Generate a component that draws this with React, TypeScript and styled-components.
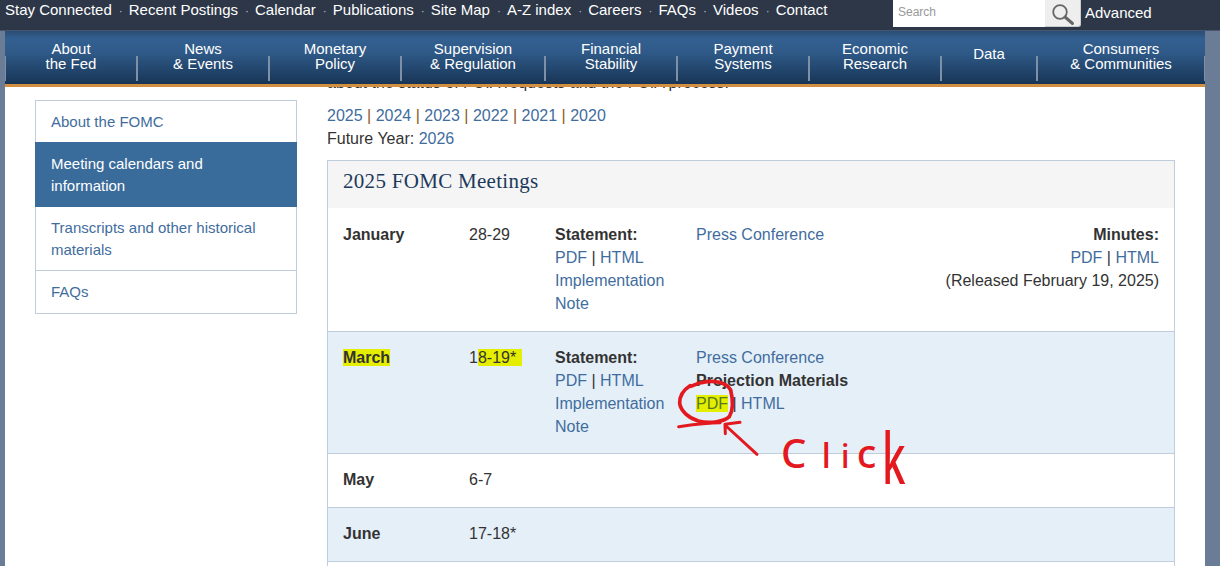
import React from 'react';
import styled, { createGlobalStyle } from 'styled-components';

const topLinks = ['Stay Connected', 'Recent Postings', 'Calendar', 'Publications', 'Site Map', 'A-Z index', 'Careers', 'FAQs', 'Videos', 'Contact'];

const navItems = [
    { lines: ['About', 'the Fed'], width: 132 },
    { lines: ['News', '& Events'], width: 132 },
    { lines: ['Monetary', 'Policy'], width: 132 },
    { lines: ['Supervision', '& Regulation'], width: 144 },
    { lines: ['Financial', 'Stability'], width: 132 },
    { lines: ['Payment', 'Systems'], width: 132 },
    { lines: ['Economic', 'Research'], width: 132 },
    { lines: ['Data'], width: 96 },
    { lines: ['Consumers', '& Communities'], width: 168 },
];

const years = ['2025', '2024', '2023', '2022', '2021', '2020'];

export default function App() {
    return (
        <Page>
            <GlobalStyle />
            <TopBar>
                <TopLinks>
                    {topLinks.map((link, i) => (
                        <TopLink key={link} $first={i === 0}>{link}</TopLink>
                    ))}
                </TopLinks>
                <SearchBox>
                    <SearchInput>Search</SearchInput>
                    <SearchButton>
                        <svg width="28" height="27" viewBox="0 0 28 27" fill="none">
                            <circle cx="11" cy="12" r="6.8" stroke="#666" strokeWidth="1.8" />
                            <path d="M16 17 L23.5 23.5" stroke="#666" strokeWidth="3" strokeLinecap="round" />
                        </svg>
                    </SearchButton>
                    <Advanced>Advanced</Advanced>
                </SearchBox>
            </TopBar>
            <Frame>
                <Nav>
                    {navItems.map((item) => (
                        <NavItem key={item.lines[0]} $width={item.width} $single={item.lines.length === 1}>
                            {item.lines.map((line) => <span key={line}>{line}</span>)}
                        </NavItem>
                    ))}
                </Nav>
                <Body>
                    <Sidebar>
                        <SideItem>About the FOMC</SideItem>
                        <SideItem $active>Meeting calendars and information</SideItem>
                        <SideItem $divided>Transcripts and other historical materials</SideItem>
                        <SideItem>FAQs</SideItem>
                    </Sidebar>
                    <Main>
                        <ClippedLine>about the status of FOIA requests and the FOIA process.</ClippedLine>
                        <div>
                            {years.map((year, i) => (
                                <React.Fragment key={year}>
                                    {i > 0 && <YearPipe> | </YearPipe>}
                                    <Link>{year}</Link>
                                </React.Fragment>
                            ))}
                        </div>
                        <div>Future Year: <Link>2026</Link></div>
                        <Panel>
                            <PanelTitle>2025 FOMC Meetings</PanelTitle>
                            <Row $height={123}>
                                <Month>January</Month>
                                <Dates>28-29</Dates>
                                <Statement>
                                    <strong>Statement:</strong>
                                    <div><Link>PDF</Link> | <Link>HTML</Link></div>
                                    <Link>Implementation Note</Link>
                                </Statement>
                                <Press><Link>Press Conference</Link></Press>
                                <Minutes>
                                    <strong>Minutes:</strong>
                                    <div><Link>PDF</Link> | <Link>HTML</Link></div>
                                    <div>(Released February 19, 2025)</div>
                                </Minutes>
                            </Row>
                            <Row $height={122} $shaded>
                                <Month><Mark>March</Mark></Month>
                                <Dates>1<Mark $tail>8-19*</Mark></Dates>
                                <Statement>
                                    <strong>Statement:</strong>
                                    <div><Link>PDF</Link> | <Link>HTML</Link></div>
                                    <Link>Implementation Note</Link>
                                </Statement>
                                <Press>
                                    <Link>Press Conference</Link>
                                    <div><strong>Projection Materials</strong></div>
                                    <div><Mark $olive>PDF</Mark> | <Link>HTML</Link></div>
                                </Press>
                            </Row>
                            <Row $height={54}>
                                <Month>May</Month>
                                <Dates>6-7</Dates>
                            </Row>
                            <Row $height={54} $shaded>
                                <Month>June</Month>
                                <Dates>17-18*</Dates>
                            </Row>
                            <Row $height={54} />
                        </Panel>
                    </Main>
                </Body>
                <Scribble width="240" height="115" viewBox="0 0 720 345" fill="none">
                    <path d="M60 32 C40 45 28 62 29 85 C32 108 55 128 85 138 C115 146 160 142 178 125 C190 105 188 70 182 45 C170 25 140 16 110 20 C92 22 75 28 62 34" stroke="#e3191f" strokeWidth="11" strokeLinecap="round" />
                    <path d="M26 155 C60 150 105 143 150 143" stroke="#e3191f" strokeWidth="9" strokeLinecap="round" />
                    <path d="M165 150 L261 238 M165 150 L166 176 M165 148 L210 142" stroke="#e3191f" strokeWidth="9" strokeLinecap="round" />
                </Scribble>
                <ClickNote>
                    <ClickLetter $size={40} $gap={15}>C</ClickLetter>
                    <ClickLetter $size={35} $gap={10}>l</ClickLetter>
                    <ClickLetter $size={33} $gap={7}>i</ClickLetter>
                    <ClickLetter $size={40} $gap={6}>c</ClickLetter>
                    <TallLetter>k</TallLetter>
                </ClickNote>
            </Frame>
        </Page>
    );
}

const GlobalStyle = createGlobalStyle`
    html, body {
        margin: 0;
        padding: 0;
        background: #6b7d96;
    }
`;

const Page = styled.div`
    width: 1220px;
    height: 566px;
    overflow: hidden;
    font-family: "Liberation Sans", Arial, sans-serif;
    font-size: 16px;
    line-height: 1.42857;
    color: #333;
    background: #6b7d96;
`;

const TopBar = styled.div`
    display: flex;
    justify-content: space-between;
    height: 30px;
    padding: 0 0 0 5px;
    background: #2d3748;
    border-bottom: 1px solid #46566c;
`;

const TopLinks = styled.div`
    display: flex;
    height: 20px;
    font-size: 15px;
    line-height: 20px;
    color: #fff;
`;

const TopLink = styled.span<{ $first?: boolean }>`
    &::before {
        content: ${(p) => (p.$first ? 'none' : '"·"')};
        display: inline-block;
        width: 17px;
        padding-left: 7px;
        box-sizing: border-box;
        color: #aab4c2;
        font-size: 12px;
    }
`;

const SearchBox = styled.div`
    display: flex;
    width: 327px;
    height: 27px;
`;

const SearchInput = styled.div`
    width: 147px;
    padding-left: 5px;
    background: #fff;
    color: #999;
    font-size: 12px;
    line-height: 24px;
`;

const SearchButton = styled.div`
    display: flex;
    align-items: center;
    justify-content: center;
    width: 36px;
    background: #eee;
    border-right: 1px solid #ccc;
    border-bottom: 1px solid #ccc;
    box-sizing: border-box;
    border-radius: 0 0 3px 0;
`;

const Advanced = styled.div`
    padding-left: 4px;
    color: #fff;
    font-size: 15px;
    line-height: 25px;
`;

const Frame = styled.div`
    position: relative;
    width: 1200px;
    height: 535px;
    margin-left: 5px;
    background: #fff;
    overflow: hidden;
`;

const Nav = styled.nav`
    position: relative;
    z-index: 1;
    display: flex;
    height: 53px;
    background: linear-gradient(#2b4d74, #336091 15%, #2f5a88 40%, #183556);
    border-bottom: 3px solid #d28f3f;
`;

const NavItem = styled.div<{ $width: number; $single: boolean }>`
    position: relative;
    display: flex;
    flex-direction: column;
    align-items: center;
    justify-content: center;
    box-sizing: border-box;
    width: ${(p) => p.$width}px;
    padding-bottom: ${(p) => (p.$single ? 8 : 4)}px;
    color: #fff;
    font-size: 15px;
    line-height: 15px;

    &::after {
        content: "";
        position: absolute;
        right: -1px;
        top: 25px;
        width: 2px;
        height: 25px;
        background: #7d90a8;
    }

    &:first-child::before {
        content: "";
        position: absolute;
        left: 0;
        top: 25px;
        width: 1px;
        height: 25px;
        background: #7d90a8;
    }
`;

const Body = styled.div`
    display: flex;
    align-items: flex-start;
    padding-left: 30px;
`;

const Sidebar = styled.div`
    width: 262px;
    margin-top: 13px;
    margin-right: 30px;
    border: 1px solid #bfcddd;
    box-sizing: border-box;
    font-size: 15px;
    line-height: 22px;
    color: #3f6d9e;
`;

const SideItem = styled.div<{ $active?: boolean; $divided?: boolean }>`
    padding: 10px 40px 10px 15px;
    background: ${(p) => (p.$active ? '#3a6c9b' : 'transparent')};
    color: ${(p) => (p.$active ? '#fff' : 'inherit')};

    &:first-child {
        padding-bottom: 9px;
    }

    ${(p) => p.$active && `
        margin: 0 -1px;
        padding: 11px 40px 10px 16px;
    `}

    ${(p) => p.$divided && `
        padding-bottom: 9px;
        border-bottom: 1px solid #bfcddd;
    `}
`;

const Main = styled.div`
    width: 848px;
`;

const ClippedLine = styled.div`
    height: 32.7px;
    margin-top: -15px;
`;

const YearPipe = styled.span`
    color: #8a5a20;
`;

const Link = styled.span`
    color: #3f6d9e;
`;

const Panel = styled.div`
    margin-top: 10px;
    border: 1px solid #bfcddd;
`;

const PanelTitle = styled.div`
    height: 47px;
    margin-bottom: 1px;
    padding-left: 15px;
    background: #f5f5f5;
    font-family: "Liberation Serif", Georgia, serif;
    font-size: 21px;
    line-height: 41px;
    letter-spacing: 0.3px;
    color: #1d3a5c;
`;

const Row = styled.div<{ $height: number; $shaded?: boolean }>`
    position: relative;
    display: flex;
    box-sizing: border-box;
    height: ${(p) => p.$height}px;
    padding: 14.85px 15px 0;
    background: ${(p) => (p.$shaded ? '#e5eff8' : '#fff')};
    border-bottom: 1px solid #bfcddd;
`;

const Month = styled.div`
    width: 126px;
    font-weight: bold;
`;

const Dates = styled.div`
    width: 86px;
`;

const Statement = styled.div`
    width: 141px;
    padding-right: 20px;
    box-sizing: border-box;
`;

const Press = styled.div`
    flex: 0 0 auto;
    width: 200px;
`;

const Minutes = styled.div`
    flex: 1;
    text-align: right;
`;

const Mark = styled.span<{ $tail?: boolean; $olive?: boolean }>`
    background: #e6ee00;
    padding-right: ${(p) => (p.$tail ? 6 : 0)}px;
    color: ${(p) => (p.$olive ? '#557a1e' : 'inherit')};
`;

const Scribble = styled.svg`
    position: absolute;
    left: 665px;
    top: 344px;
    z-index: 2;
`;

const ClickNote = styled.div`
    position: absolute;
    left: 776px;
    top: 380px;
    z-index: 2;
    display: flex;
    align-items: baseline;
    height: 60px;
    font-family: "Noto Sans", sans-serif;
    font-weight: 500;
    line-height: 60px;
    color: #e3191f;
`;

const ClickLetter = styled.span<{ $size: number; $gap: number }>`
    font-size: ${(p) => p.$size}px;
    margin-right: ${(p) => p.$gap}px;
`;

const TallLetter = styled.span`
    display: inline-block;
    font-size: 70px;
    width: 30px;
    transform: translateY(16px) scaleX(0.6);
    transform-origin: left bottom;
`;
